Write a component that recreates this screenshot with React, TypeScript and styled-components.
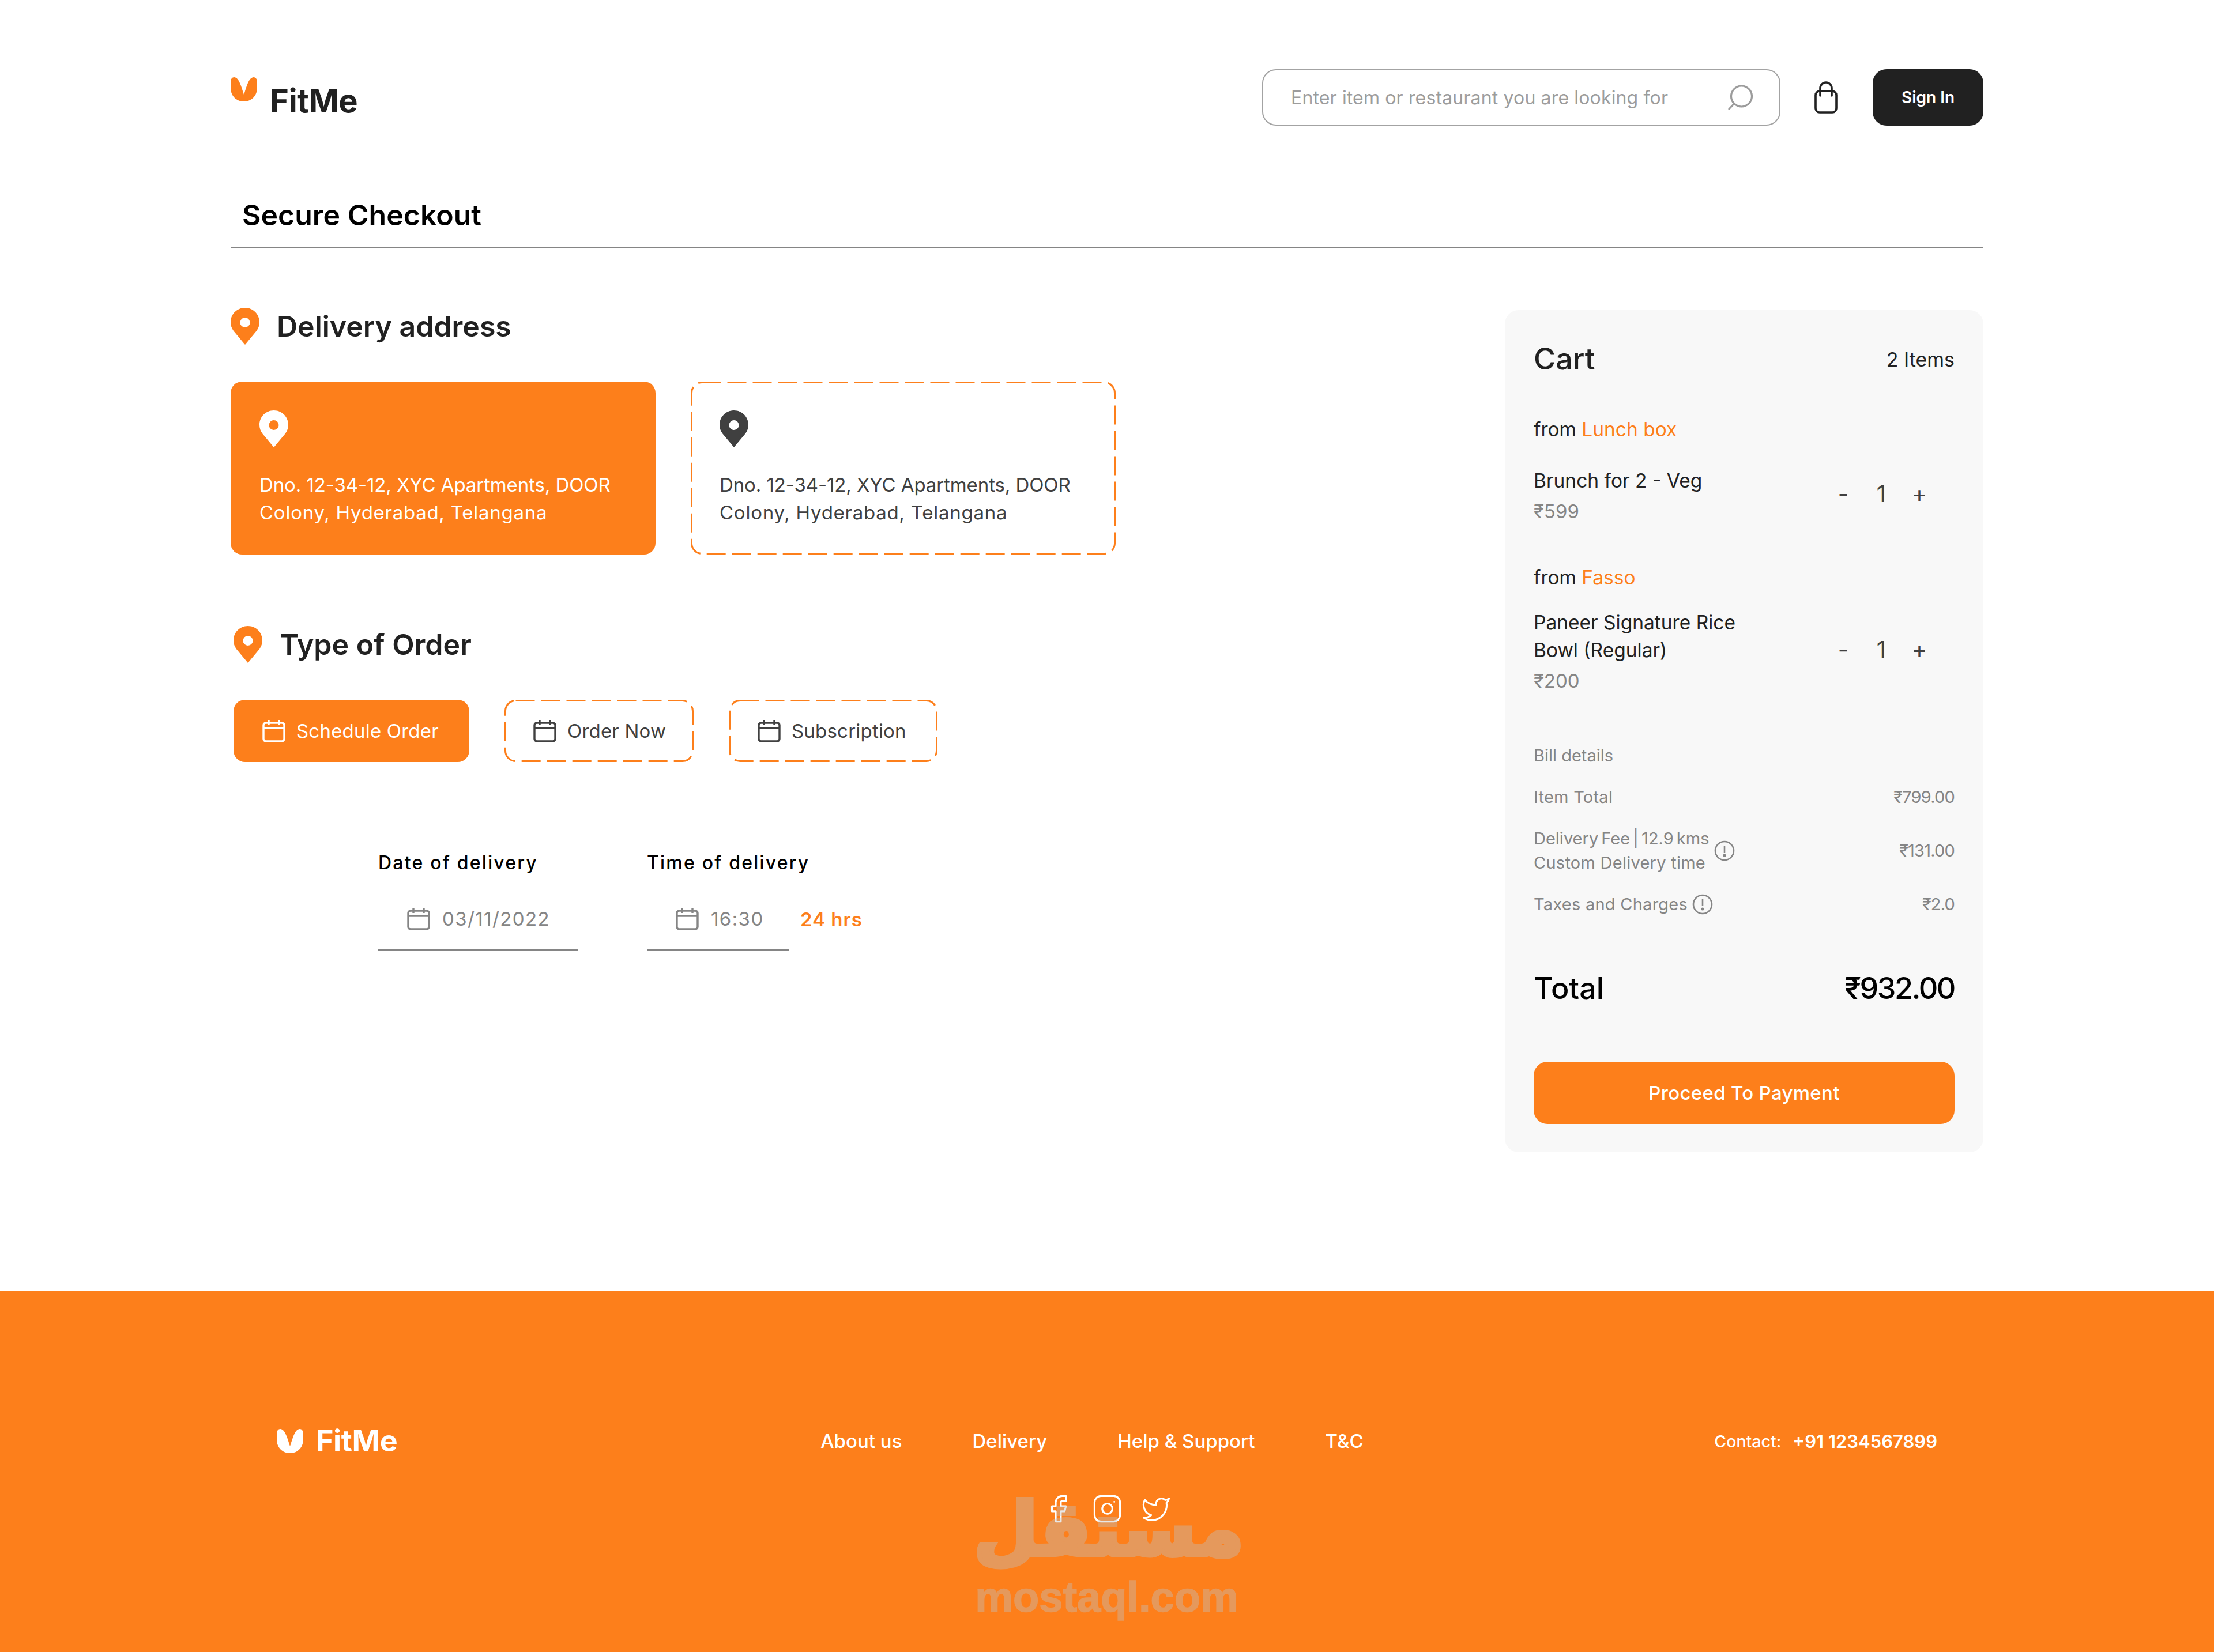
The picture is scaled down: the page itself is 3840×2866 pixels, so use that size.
import React, { FC } from 'react';
import styled, { createGlobalStyle } from 'styled-components';
import { Facebook, Instagram, Twitter } from 'lucide-react';

const ORANGE = '#fd7f1b';
const DARK = '#212121';
const GREY = '#858585';

const GlobalStyle = createGlobalStyle`
  html, body {
    margin: 0;
    padding: 0;
    background: #fff;
  }
  * {
    box-sizing: border-box;
  }
  body {
    font-family: Inter, "Noto Sans", "Liberation Sans", sans-serif;
    color: ${DARK};
  }
`;

const Page = styled.div`
  width: 3840px;
  height: 2866px;
  display: flex;
  flex-direction: column;
  overflow: hidden;
`;

const Main = styled.main`
  flex: 1;
  padding: 120px 400px 0;
`;

const Header = styled.header`
  display: flex;
  align-items: center;
  justify-content: space-between;
  height: 98px;
`;

const LogoWrap = styled.div<{ $light?: boolean }>`
  display: flex;
  align-items: ${p => (p.$light ? 'center' : 'flex-start')};
  gap: 22px;
  color: ${p => (p.$light ? '#fff' : DARK)};
`;

const LogoText = styled.span<{ $light?: boolean }>`
  font-size: ${p => (p.$light ? 52 : 56)}px;
  line-height: 60px;
  font-weight: 700;
  letter-spacing: -0.4px;
  margin-top: ${p => (p.$light ? 0 : 11)}px;
`;

const HeaderActions = styled.div`
  display: flex;
  align-items: center;
`;

const SearchBox = styled.div`
  width: 899px;
  height: 98px;
  border: 2px solid #a3a3a3;
  border-radius: 24px;
  display: flex;
  align-items: center;
  justify-content: space-between;
  padding: 0 46px 0 48px;
  font-size: 32px;
  letter-spacing: 0.15px;
  color: #9c9c9c;
`;

const BagButton = styled.div`
  display: flex;
  margin: 0 61px 0 59px;
`;

const SignIn = styled.button`
  width: 192px;
  height: 98px;
  border: none;
  border-radius: 24px;
  background: ${DARK};
  color: #fff;
  font-family: inherit;
  font-size: 28px;
  font-weight: 600;
`;

const PageTitle = styled.h1`
  margin: 125px 0 0;
  padding: 0 0 25px 20px;
  border-bottom: 3px solid ${GREY};
  font-size: 50px;
  line-height: 60px;
  font-weight: 600;
  color: #000;
`;

const Body = styled.div`
  display: flex;
  justify-content: space-between;
  align-items: flex-start;
  margin-top: 103px;
`;

const LeftColumn = styled.div`
  display: flex;
  flex-direction: column;
`;

const SectionHeader = styled.div<{ $indent?: number; $top?: number }>`
  display: flex;
  align-items: center;
  gap: 30px;
  height: 64px;
  margin-left: ${p => p.$indent ?? 0}px;
  margin-top: ${p => p.$top ?? 0}px;
`;

const SectionTitle = styled.h2`
  margin: 0;
  font-size: 50px;
  font-weight: 600;
  color: ${DARK};
`;

const Cards = styled.div`
  display: flex;
  gap: 61px;
  margin-top: 64px;
`;

const AddressCard = styled.div<{ $active?: boolean }>`
  position: relative;
  width: 737px;
  height: 300px;
  padding: 50px;
  border-radius: 20px;
  background: ${p => (p.$active ? ORANGE : '#fff')};
  color: ${p => (p.$active ? '#fff' : '#404040')};
`;

const AddressText = styled.p`
  margin: 37px 0 0;
  font-size: 33px;
  line-height: 48px;
  white-space: nowrap;
`;

const AddressLine = styled.span<{ $spacing: number }>`
  display: block;
  letter-spacing: ${p => p.$spacing}px;
`;

const DashFrame = styled.svg`
  position: absolute;
  inset: 0;
  width: 100%;
  height: 100%;
  pointer-events: none;
`;

const DashRect = styled.rect`
  x: 1.5px;
  y: 1.5px;
  width: calc(100% - 3px);
  height: calc(100% - 3px);
  fill: none;
  stroke: ${ORANGE};
  stroke-width: 3;
  stroke-dasharray: 33 11;
`;

const OrderTypes = styled.div`
  display: flex;
  gap: 61px;
  margin: 64px 0 0 5px;
`;

const OrderButton = styled.div<{ $active?: boolean; $width: number }>`
  position: relative;
  display: flex;
  align-items: center;
  gap: 19px;
  width: ${p => p.$width}px;
  height: 108px;
  padding-left: 50px;
  border-radius: 20px;
  font-size: 33px;
  letter-spacing: 0.2px;
  background: ${p => (p.$active ? ORANGE : '#fff')};
  color: ${p => (p.$active ? '#fff' : '#404040')};
`;

const Fields = styled.div`
  display: flex;
  gap: 120px;
  margin: 151px 0 0 256px;
`;

const Field = styled.div`
  display: flex;
  flex-direction: column;
`;

const FieldLabel = styled.div`
  font-size: 32px;
  line-height: 48px;
  font-weight: 500;
  letter-spacing: 2.2px;
  color: #000;
`;

const FieldRow = styled.div`
  display: flex;
  gap: 20px;
  margin-top: 40px;
`;

const FieldInput = styled.div<{ $width: number }>`
  display: flex;
  align-items: center;
  gap: 21px;
  width: ${p => p.$width}px;
  height: 88px;
  padding: 0 0 20px 50px;
  border-bottom: 3px solid ${GREY};
  font-size: 33px;
  letter-spacing: 1.4px;
  color: ${GREY};
`;

const FieldNote = styled.span`
  height: 66px;
  line-height: 68px;
  font-size: 33px;
  font-weight: 600;
  letter-spacing: 1px;
  color: ${ORANGE};
`;

const Cart = styled.aside`
  width: 830px;
  margin-top: 4px;
  padding: 50px 50px 49px;
  border-radius: 24px;
  background: #f8f8f8;
`;

const SpacedRow = styled.div<{ $top?: number }>`
  display: flex;
  align-items: center;
  justify-content: space-between;
  margin-top: ${p => p.$top ?? 0}px;
`;

const CartTitle = styled.h3`
  margin: 0;
  font-size: 52px;
  line-height: 70px;
  font-weight: 500;
`;

const CartCount = styled.span`
  font-size: 34px;
  font-weight: 400;
`;

const FromLine = styled.div<{ $top: number }>`
  margin-top: ${p => p.$top}px;
  font-size: 33.5px;
  line-height: 48px;
  color: #212121;
`;

const Accent = styled.span`
  color: ${ORANGE};
`;

const ItemRow = styled.div<{ $top: number }>`
  display: flex;
  align-items: center;
  justify-content: space-between;
  margin-top: ${p => p.$top}px;
`;

const ItemName = styled.div`
  font-size: 33.5px;
  line-height: 48px;
  color: ${DARK};
`;

const ItemPrice = styled.div`
  margin-top: 5px;
  font-size: 33px;
  line-height: 48px;
  color: ${GREY};
`;

const Stepper = styled.div`
  display: flex;
  margin: 0 28px 8px 0;
  color: #404040;
  font-size: 40px;
`;

const StepCell = styled.span`
  width: 66px;
  text-align: center;
`;

const BillHeading = styled.div`
  margin-top: 85px;
  font-size: 29px;
  line-height: 42px;
  color: ${GREY};
`;

const BillRow = styled.div`
  display: flex;
  align-items: center;
  justify-content: space-between;
  margin-top: 30px;
  font-size: 29px;
  line-height: 42px;
  letter-spacing: 0.25px;
  color: ${GREY};
`;

const BillLabel = styled.div`
  display: flex;
  align-items: center;
  gap: 8px;
`;

const TightLine = styled.span`
  letter-spacing: 0;
  word-spacing: -3px;
`;

const BillAmount = styled.span`
  letter-spacing: -0.8px;
`;

const TotalRow = styled(SpacedRow)`
  font-size: 52px;
  line-height: 72px;
  font-weight: 500;
  color: #000;
`;

const TotalAmount = styled.span`
  letter-spacing: -2.4px;
`;

const PayButton = styled.button`
  display: block;
  width: 100%;
  height: 108px;
  margin-top: 91px;
  border: none;
  border-radius: 24px;
  background: ${ORANGE};
  color: #fff;
  font-family: inherit;
  font-size: 33px;
  font-weight: 500;
  letter-spacing: 0.3px;
`;

const Footer = styled.footer`
  position: relative;
  height: 627px;
  padding: 231px 480px 0;
  background: ${ORANGE};
  color: #fff;
`;

const FooterRow = styled.div`
  display: flex;
  align-items: center;
  height: 60px;
`;

const FooterLinks = styled.nav`
  display: flex;
  gap: 122px;
  margin-left: 734px;
  font-size: 33px;
  font-weight: 500;
`;

const Contact = styled.div`
  display: flex;
  align-items: center;
  gap: 20px;
  margin-left: auto;
  font-size: 28.5px;
  font-weight: 500;
`;

const Phone = styled.span`
  font-size: 31px;
  font-weight: 600;
`;

const Socials = styled.div`
  display: flex;
  justify-content: center;
  gap: 32px;
  margin-top: 61px;
`;

const Watermark = styled.div`
  position: absolute;
  left: 1689px;
  top: 336px;
  width: 461px;
  color: #c2c2c2;
  opacity: 0.39;
  text-align: center;
  pointer-events: none;
`;

const WatermarkArabic = styled.div`
  font-family: "DejaVu Sans", sans-serif;
  font-size: 128px;
  line-height: 158px;
  font-weight: 700;
  white-space: nowrap;
  -webkit-text-stroke: 8px #c2c2c2;
`;

const WatermarkLatin = styled.div`
  font-family: "Liberation Sans", sans-serif;
  font-size: 74px;
  line-height: 76px;
  font-weight: 700;
  -webkit-text-stroke: 1.5px #c2c2c2;
`;

const LogoMark: FC<{ color: string }> = ({ color }) => (
  <svg width="46" height="42" viewBox="0 0 46 42">
    <path
      fill={color}
      d="M0 8C0 3 2.8 0 6 0c4.5 0 8.5 5 12 15 2 5.5 3.5 11 5 15 1.5-4 3-9.5 5-15C31.500 5 35.500 0 40 0c3.200 0 6 3 6 8v10c0 14-9.500 24-23 24S0 32 0 18z"
    />
  </svg>
);

const Logo: FC<{ light?: boolean }> = ({ light }) => (
  <LogoWrap $light={light}>
    <LogoMark color={light ? '#fff' : ORANGE} />
    <LogoText $light={light}>FitMe</LogoText>
  </LogoWrap>
);

const PinIcon: FC<{ color: string }> = ({ color }) => (
  <svg width="50" height="64" viewBox="0 0 50 64">
    <path
      fill={color}
      fillRule="evenodd"
      d="M25 0C11 0 0 11.200 0 25c0 5.500 1.800 10.500 5 15l20 24 20-24c3.200-4.500 5-9.500 5-15C50 11.200 39 0 25 0zm0 17a8.500 8.500 0 1 1 0 17 8.500 8.500 0 0 1 0-17z"
    />
  </svg>
);

const CalendarIcon: FC<{ color: string }> = ({ color }) => (
  <svg width="40" height="40" viewBox="0 0 40 40" fill="none" stroke={color} strokeWidth="3.400">
    <rect x="2" y="6" width="36" height="32" rx="4" />
    <path d="M2 15h36M11 1v9M29 1v9" />
  </svg>
);

const SearchIcon: FC = () => (
  <svg width="44" height="44" viewBox="0 0 44 44" fill="none" stroke="#9c9c9c" strokeWidth="3.200">
    <circle cx="24.500" cy="20" r="18" />
    <path d="M11.500 33 3 42" strokeLinecap="round" />
  </svg>
);

const BagIcon: FC = () => (
  <svg width="40" height="56" viewBox="0 0 40 56" fill="none" stroke={DARK} strokeWidth="3.600">
    <rect x="2" y="17" width="36" height="37" rx="7" />
    <path d="M10 25V12a10 10 0 0 1 20 0v13" strokeLinecap="round" />
  </svg>
);

const InfoIcon: FC = () => (
  <svg width="36" height="36" viewBox="0 0 36 36" fill="none" stroke={GREY} strokeWidth="2.600">
    <circle cx="18" cy="18" r="16" />
    <path d="M18 9v12" />
    <circle cx="18" cy="26" r="1.200" fill={GREY} />
  </svg>
);

const Dashed: FC = () => (
  <DashFrame>
    <DashRect rx="18" />
  </DashFrame>
);

const Address: FC = () => (
  <AddressText>
    <AddressLine $spacing={-0.1}>Dno. 12-34-12, XYC Apartments, DOOR</AddressLine>
    <AddressLine $spacing={0.75}>Colony, Hyderabad, Telangana</AddressLine>
  </AddressText>
);

const orderTypes = [
  { label: 'Schedule Order', width: 409, active: true },
  { label: 'Order Now', width: 328, active: false },
  { label: 'Subscription', width: 362, active: false },
];

const App: FC = () => (
  <Page>
    <GlobalStyle />
    <Main>
      <Header>
        <Logo />
        <HeaderActions>
          <SearchBox>
            Enter item or restaurant you are looking for
            <SearchIcon />
          </SearchBox>
          <BagButton>
            <BagIcon />
          </BagButton>
          <SignIn>Sign In</SignIn>
        </HeaderActions>
      </Header>

      <PageTitle>Secure Checkout</PageTitle>

      <Body>
        <LeftColumn>
          <SectionHeader>
            <PinIcon color={ORANGE} />
            <SectionTitle>Delivery address</SectionTitle>
          </SectionHeader>
          <Cards>
            <AddressCard $active>
              <PinIcon color="#fff" />
              <Address />
            </AddressCard>
            <AddressCard>
              <Dashed />
              <PinIcon color="#404040" />
              <Address />
            </AddressCard>
          </Cards>

          <SectionHeader $indent={5} $top={124}>
            <PinIcon color={ORANGE} />
            <SectionTitle>Type of Order</SectionTitle>
          </SectionHeader>
          <OrderTypes>
            {orderTypes.map(type => (
              <OrderButton key={type.label} $active={type.active} $width={type.width}>
                {!type.active && <Dashed />}
                <CalendarIcon color={type.active ? '#fff' : '#404040'} />
                {type.label}
              </OrderButton>
            ))}
          </OrderTypes>

          <Fields>
            <Field>
              <FieldLabel>Date of delivery</FieldLabel>
              <FieldRow>
                <FieldInput $width={346}>
                  <CalendarIcon color={GREY} />
                  03/11/2022
                </FieldInput>
              </FieldRow>
            </Field>
            <Field>
              <FieldLabel>Time of delivery</FieldLabel>
              <FieldRow>
                <FieldInput $width={246}>
                  <CalendarIcon color={GREY} />
                  16:30
                </FieldInput>
                <FieldNote>24 hrs</FieldNote>
              </FieldRow>
            </Field>
          </Fields>
        </LeftColumn>

        <Cart>
          <SpacedRow>
            <CartTitle>Cart</CartTitle>
            <CartCount>2 Items</CartCount>
          </SpacedRow>

          <FromLine $top={63}>
            from <Accent>Lunch box</Accent>
          </FromLine>
          <ItemRow $top={41}>
            <div>
              <ItemName>Brunch for 2 - Veg</ItemName>
              <ItemPrice>₹599</ItemPrice>
            </div>
            <Stepper>
              <StepCell>-</StepCell>
              <StepCell>1</StepCell>
              <StepCell>+</StepCell>
            </Stepper>
          </ItemRow>

          <FromLine $top={67}>
            from <Accent>Fasso</Accent>
          </FromLine>
          <ItemRow $top={30}>
            <div>
              <ItemName>
                Paneer Signature Rice
                <br />
                Bowl (Regular)
              </ItemName>
              <ItemPrice>₹200</ItemPrice>
            </div>
            <Stepper>
              <StepCell>-</StepCell>
              <StepCell>1</StepCell>
              <StepCell>+</StepCell>
            </Stepper>
          </ItemRow>

          <BillHeading>Bill details</BillHeading>
          <BillRow>
            <span>Item Total</span>
            <BillAmount>₹799.00</BillAmount>
          </BillRow>
          <BillRow>
            <BillLabel>
              <span>
                <TightLine>Delivery Fee | 12.9 kms</TightLine>
                <br />
                Custom Delivery time
              </span>
              <InfoIcon />
            </BillLabel>
            <BillAmount>₹131.00</BillAmount>
          </BillRow>
          <BillRow>
            <BillLabel>
              <span>Taxes and Charges</span>
              <InfoIcon />
            </BillLabel>
            <BillAmount>₹2.0</BillAmount>
          </BillRow>

          <TotalRow $top={89}>
            <span>Total</span>
            <TotalAmount>₹932.00</TotalAmount>
          </TotalRow>

          <PayButton>Proceed To Payment</PayButton>
        </Cart>
      </Body>
    </Main>

    <Footer>
      <FooterRow>
        <Logo light />
        <FooterLinks>
          <span>About us</span>
          <span>Delivery</span>
          <span>Help &amp; Support</span>
          <span>T&amp;C</span>
        </FooterLinks>
        <Contact>
          Contact:
          <Phone>+91 1234567899</Phone>
        </Contact>
      </FooterRow>
      <Socials>
        <Facebook size={53} strokeWidth={1.4} />
        <Instagram size={53} strokeWidth={1.4} />
        <Twitter size={53} strokeWidth={1.4} />
      </Socials>
      <Watermark>
        <WatermarkArabic>مستقل</WatermarkArabic>
        <WatermarkLatin>mostaql.com</WatermarkLatin>
      </Watermark>
    </Footer>
  </Page>
);

export default App;
